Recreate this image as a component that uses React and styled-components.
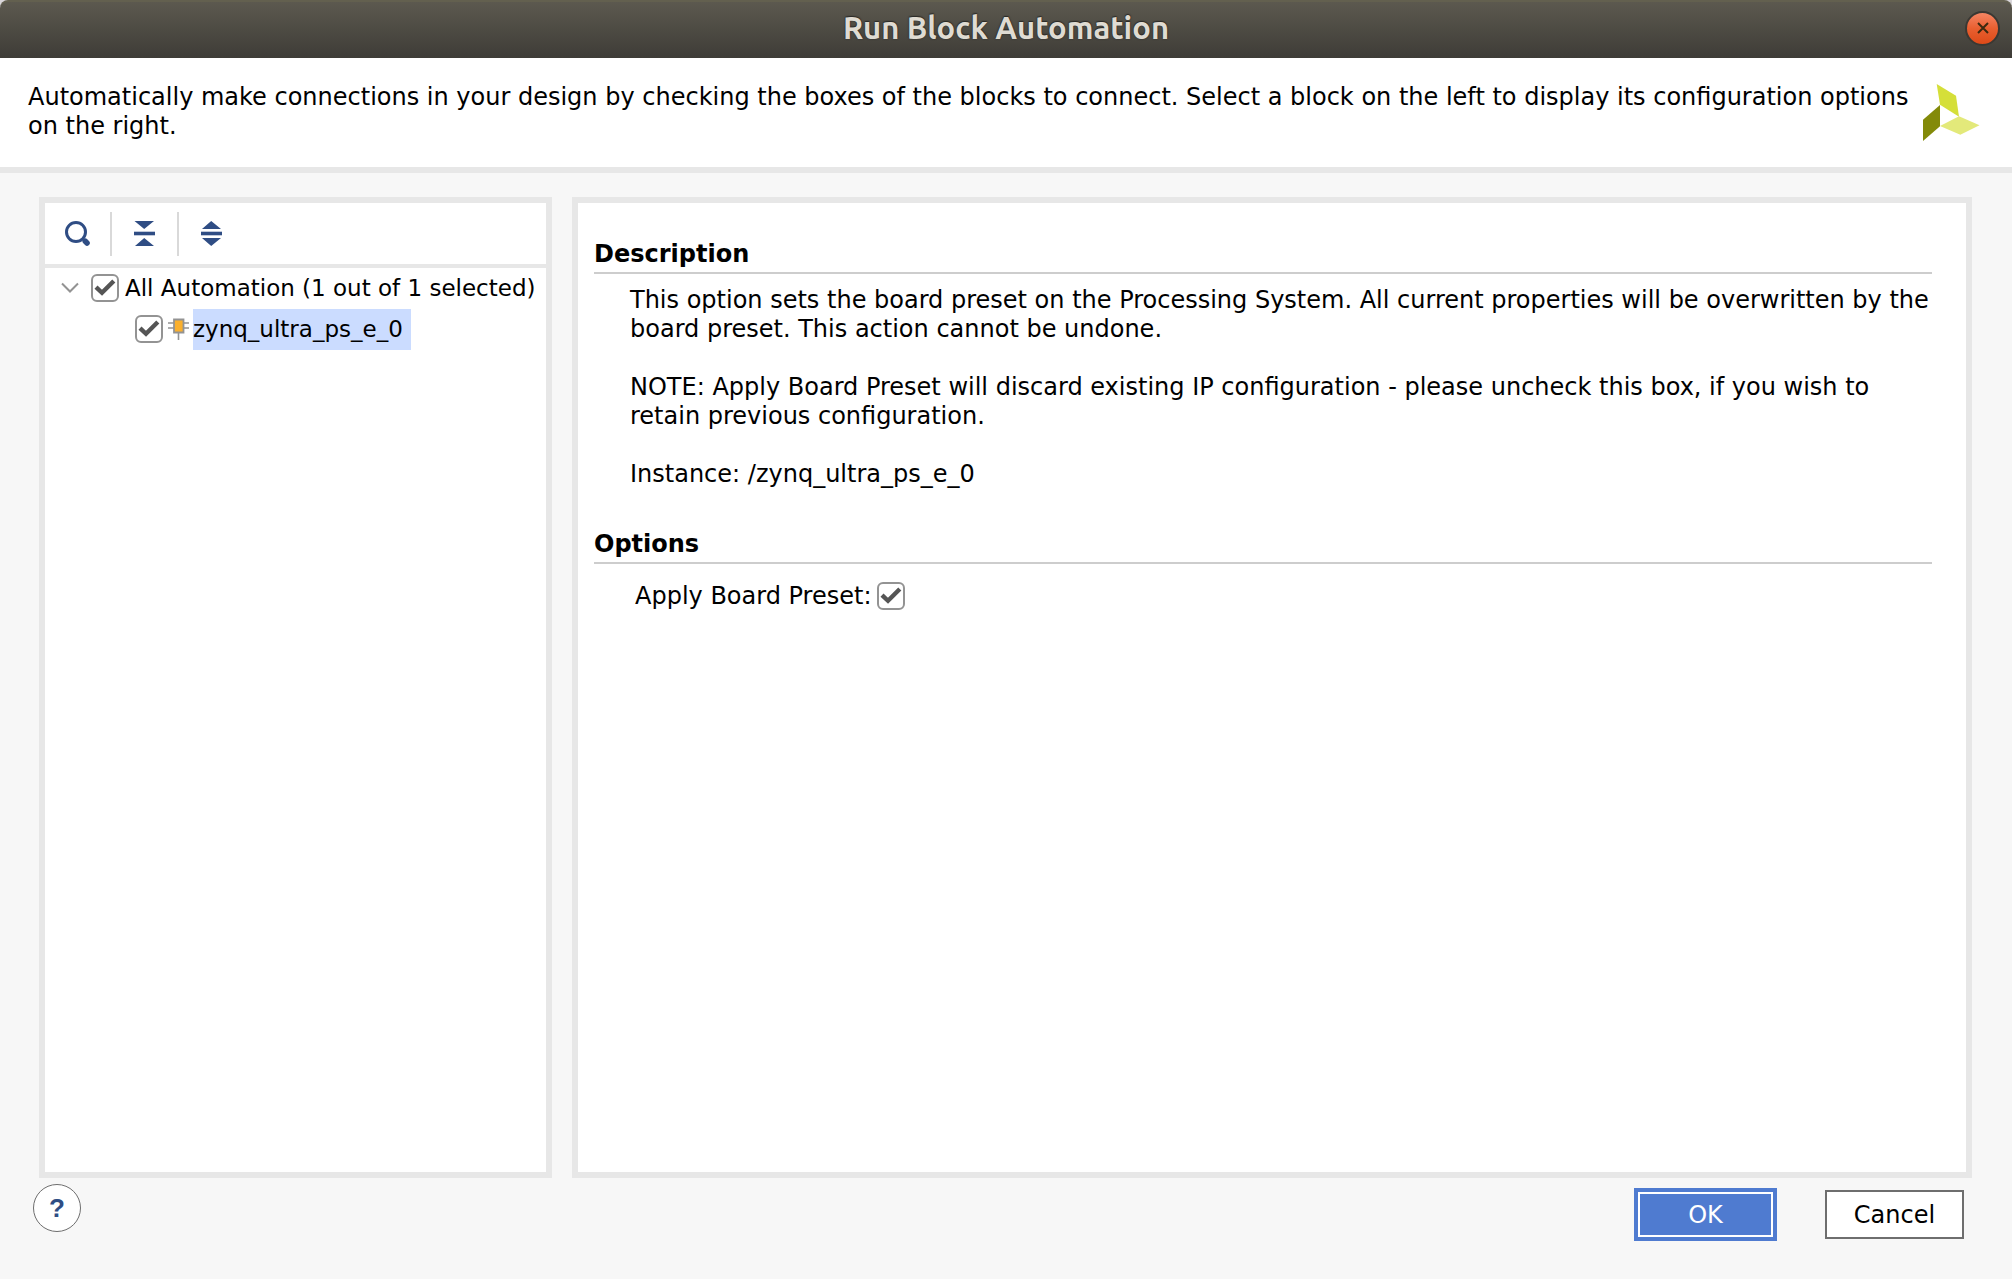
import React from "react";
import styled, { createGlobalStyle } from "styled-components";

const GlobalStyle = createGlobalStyle`
  *, *::before, *::after { box-sizing: border-box; }
  body {
    margin: 0;
    background: #f7f7f7;
    color: #000;
    font-family: "DejaVu Sans", sans-serif;
    font-size: 24px;
    line-height: 29px;
  }
  button { font: inherit; margin: 0; cursor: pointer; }
  h1, h2, p { margin: 0; }
  svg { display: block; }
`;

const Dialog = styled.div`
  display: flex;
  flex-direction: column;
  min-height: 100vh;
`;

const TitleStrip = styled.div`
  background: #d9d6da;
`;

const TitleBar = styled.header`
  display: grid;
  grid-template-columns: 1fr auto 1fr;
  align-items: center;
  height: 58px;
  padding: 0 12px 4px;
  border-radius: 8px 8px 0 0;
  border-top: 2px solid #63604f;
  background: linear-gradient(#5c594f, #3e3c37);
`;

const Title = styled.h1`
  grid-column: 2;
  color: #dfdbd2;
  font-family: Ubuntu, "Noto Sans", sans-serif;
  font-size: 31px;
  font-weight: 700;
  line-height: 36px;
  text-shadow: 0 0 2px #2b2a27, 0 -1px 1px #2b2a27;
`;

const CloseButton = styled.button`
  justify-self: end;
  display: grid;
  place-items: center;
  width: 35px;
  height: 35px;
  padding: 0;
  border: 2px solid #3a3833;
  border-radius: 50%;
  background: linear-gradient(#f58563, #e95f30 50%, #dd4a18);
`;

const Intro = styled.section`
  display: flex;
  align-items: flex-start;
  gap: 8px;
  padding: 25px 32px 26px 28px;
  border-bottom: 6px solid #e7e7e7;
  background: #fff;
`;

const IntroText = styled.p`
  flex: 1;
`;

const LogoBox = styled.div`
  padding-top: 1px;
`;

const Panels = styled.main`
  flex: 1;
  display: grid;
  grid-template-columns: 513px 1fr;
  gap: 20px;
  padding: 24px 40px 0 39px;
`;

const Panel = styled.section`
  border: 6px solid #e7e7e7;
  background: #fff;
`;

const DetailPanel = styled(Panel)`
  padding: 37px 34px 37px 16px;
`;

const Toolbar = styled.div`
  display: flex;
  align-items: center;
  height: 65px;
  border-bottom: 4px solid #e7e7e7;
`;

const ToolButton = styled.button`
  display: grid;
  place-items: center;
  width: 65px;
  height: 44px;
  padding: 0;
  border: 0;
  background: none;
`;

const Separator = styled.span`
  width: 2px;
  height: 44px;
  background: #d9d9d9;
`;

const Tree = styled.ul`
  margin: 0;
  padding: 0;
  list-style: none;
  font-size: 23px;
`;

const TreeRow = styled.div`
  display: flex;
  align-items: center;
  height: 41px;
  padding-bottom: 1px;
  padding-left: ${(p) => (p.$depth ? 90 : 16)}px;
`;

const Expander = styled.button`
  display: grid;
  place-items: center;
  width: 30px;
  height: 30px;
  padding: 0 12px 0 0;
  border: 0;
  background: none;
`;

const TreeLabel = styled.label`
  flex: none;
  align-self: flex-start;
  margin-left: ${(p) => (p.$selected ? 4 : 6)}px;
  padding-right: 8px;
  line-height: 41px;
  white-space: nowrap;
  background: ${(p) => (p.$selected ? "#cbdcff" : "transparent")};
`;

const BlockIcon = styled.span`
  margin-left: 5px;
`;

const CheckFrame = styled.span`
  display: grid;
  flex: none;
  width: 28px;
  height: 28px;

  > * { grid-area: 1 / 1; }
  > svg { place-self: center; pointer-events: none; }
  > input:not(:checked) + svg { visibility: hidden; }
`;

const CheckInput = styled.input`
  appearance: none;
  width: 28px;
  height: 28px;
  margin: 0;
  border: 2px solid #939393;
  border-radius: 6px;
  background: #fff;
`;

const Heading = styled.h2`
  padding-bottom: 3px;
  border-bottom: 2px solid #cdcdcd;
  font-size: 24px;
  font-weight: 700;
  line-height: 29px;
`;

const Description = styled.div`
  display: grid;
  gap: 29px;
  padding: 12px 0 41px 36px;
`;

const OptionRow = styled.div`
  display: flex;
  align-items: flex-start;
  gap: 6px;
  padding: 18px 0 0 41px;
`;

const Footer = styled.footer`
  display: flex;
  align-items: flex-start;
  padding: 6px 48px 38px 33px;
`;

const HelpButton = styled.button`
  width: 48px;
  height: 48px;
  margin-right: auto;
  padding: 0;
  border: 1px solid #6e6e6e;
  border-radius: 50%;
  background: #fff;
  color: #2f4d84;
  && {
    font-family: "Liberation Sans", sans-serif;
    font-size: 26px;
    font-weight: 700;
  }
`;

const Actions = styled.div`
  display: flex;
  align-items: center;
  gap: 48px;
  padding-top: 4px;
`;

const OkButton = styled.button`
  width: 143px;
  height: 53px;
  padding: 2px 0 0;
  border: 4px solid #4f7bd0;
  background: #4f7bd0;
  box-shadow: inset 0 0 0 2px #fff;
  color: #fff;
`;

const CancelButton = styled.button`
  width: 139px;
  height: 49px;
  padding: 2px 0 0;
  border: 2px solid #6e6e6e;
  background: #fff;
  color: #000;
`;

function CheckBox({ id }) {
  return (
    <CheckFrame>
      <CheckInput type="checkbox" id={id} defaultChecked />
      <svg width="28" height="28" viewBox="0 0 28 28" aria-hidden="true">
        <path d="M5 13.2 11 18.8 22.8 7" fill="none" stroke="#555" strokeWidth="4.4" />
      </svg>
    </CheckFrame>
  );
}

function Logo() {
  return (
    <svg width="57" height="57" viewBox="0 0 57 57" role="img" aria-label="Xilinx">
      <path d="M13.7 0 33 11.7 36 32.7 17 20.7Z" fill="#d5df39" />
      <path d="M0 35.7 17 21V42.3L0 57Z" fill="#838a09" />
      <path d="M17 42 36 32.3 56.5 41.3 37.3 50.7Z" fill="#e3e97a" />
    </svg>
  );
}

export default function App() {
  return (
    <Dialog>
      <GlobalStyle />
      <TitleStrip>
        <TitleBar>
          <Title>Run Block Automation</Title>
          <CloseButton aria-label="Close">
            <svg width="12" height="12" viewBox="0 0 12 12">
              <path d="M1 1 11 11M11 1 1 11" stroke="#3b2a10" strokeWidth="2" />
            </svg>
          </CloseButton>
        </TitleBar>
      </TitleStrip>

      <Intro>
        <IntroText>
          Automatically make connections in your design by checking the boxes of the blocks to
          connect. Select a block on the left to display its configuration options on the right.
        </IntroText>
        <LogoBox>
          <Logo />
        </LogoBox>
      </Intro>

      <Panels>
        <Panel>
          <Toolbar>
            <ToolButton aria-label="Search">
              <svg width="25" height="25" viewBox="0 0 25 25">
                <circle cx="11" cy="11" r="9.5" fill="none" stroke="#2f4d84" strokeWidth="3" />
                <path d="M20.3 20.3 22 22" stroke="#2f4d84" strokeWidth="5.6" strokeLinecap="round" />
              </svg>
            </ToolButton>
            <Separator />
            <ToolButton aria-label="Collapse all">
              <svg width="21" height="25" viewBox="0 0 21 25" fill="#2f4d84">
                <path d="M0.5 0H20L10.2 8ZM0 11H21V14H0ZM1 25H20L10.2 17Z" />
                <path d="M0 10H21V11H0ZM0 14H21V15H0Z" opacity="0.3" />
              </svg>
            </ToolButton>
            <Separator />
            <ToolButton aria-label="Expand all">
              <svg width="21" height="25" viewBox="0 0 21 25" fill="#2f4d84">
                <path d="M1 8H20L10.2 0ZM0 11H21V14H0ZM1 17H20L10.2 25Z" />
                <path d="M0 10H21V11H0ZM0 14H21V15H0Z" opacity="0.3" />
              </svg>
            </ToolButton>
          </Toolbar>
          <Tree>
            <li>
              <TreeRow>
                <Expander aria-label="Collapse All Automation">
                  <svg width="18" height="12" viewBox="0 0 18 12">
                    <path d="M1 1.5 9 9.5 17 1.5" fill="none" stroke="#939393" strokeWidth="2" />
                  </svg>
                </Expander>
                <CheckBox id="all-automation" />
                <TreeLabel htmlFor="all-automation">All Automation (1 out of 1 selected)</TreeLabel>
              </TreeRow>
              <Tree>
                <li>
                  <TreeRow $depth={1}>
                    <CheckBox id="zynq" />
                    <BlockIcon>
                      <svg width="21" height="26" viewBox="0 0 21 26">
                        <path d="M0 7H21M0 12H21M10.5 16V24" stroke="#939393" strokeWidth="1.6" />
                        <path d="M6 3.5H15.5V16.5H6Z" fill="#fbb02d" stroke="#939393" strokeWidth="1.8" />
                      </svg>
                    </BlockIcon>
                    <TreeLabel htmlFor="zynq" $selected>zynq_ultra_ps_e_0</TreeLabel>
                  </TreeRow>
                </li>
              </Tree>
            </li>
          </Tree>
        </Panel>

        <DetailPanel>
          <Heading>Description</Heading>
          <Description>
            <p>
              This option sets the board preset on the Processing System. All current properties
              will be overwritten by the board preset. This action cannot be undone.
            </p>
            <p>
              NOTE: Apply Board Preset will discard existing IP configuration - please uncheck this
              box, if you wish to retain previous configuration.
            </p>
            <p>Instance: /zynq_ultra_ps_e_0</p>
          </Description>
          <Heading>Options</Heading>
          <OptionRow>
            <label htmlFor="apply-preset">Apply Board Preset:</label>
            <CheckBox id="apply-preset" />
          </OptionRow>
        </DetailPanel>
      </Panels>

      <Footer>
        <HelpButton aria-label="Help">?</HelpButton>
        <Actions>
          <OkButton>OK</OkButton>
          <CancelButton>Cancel</CancelButton>
        </Actions>
      </Footer>
    </Dialog>
  );
}
